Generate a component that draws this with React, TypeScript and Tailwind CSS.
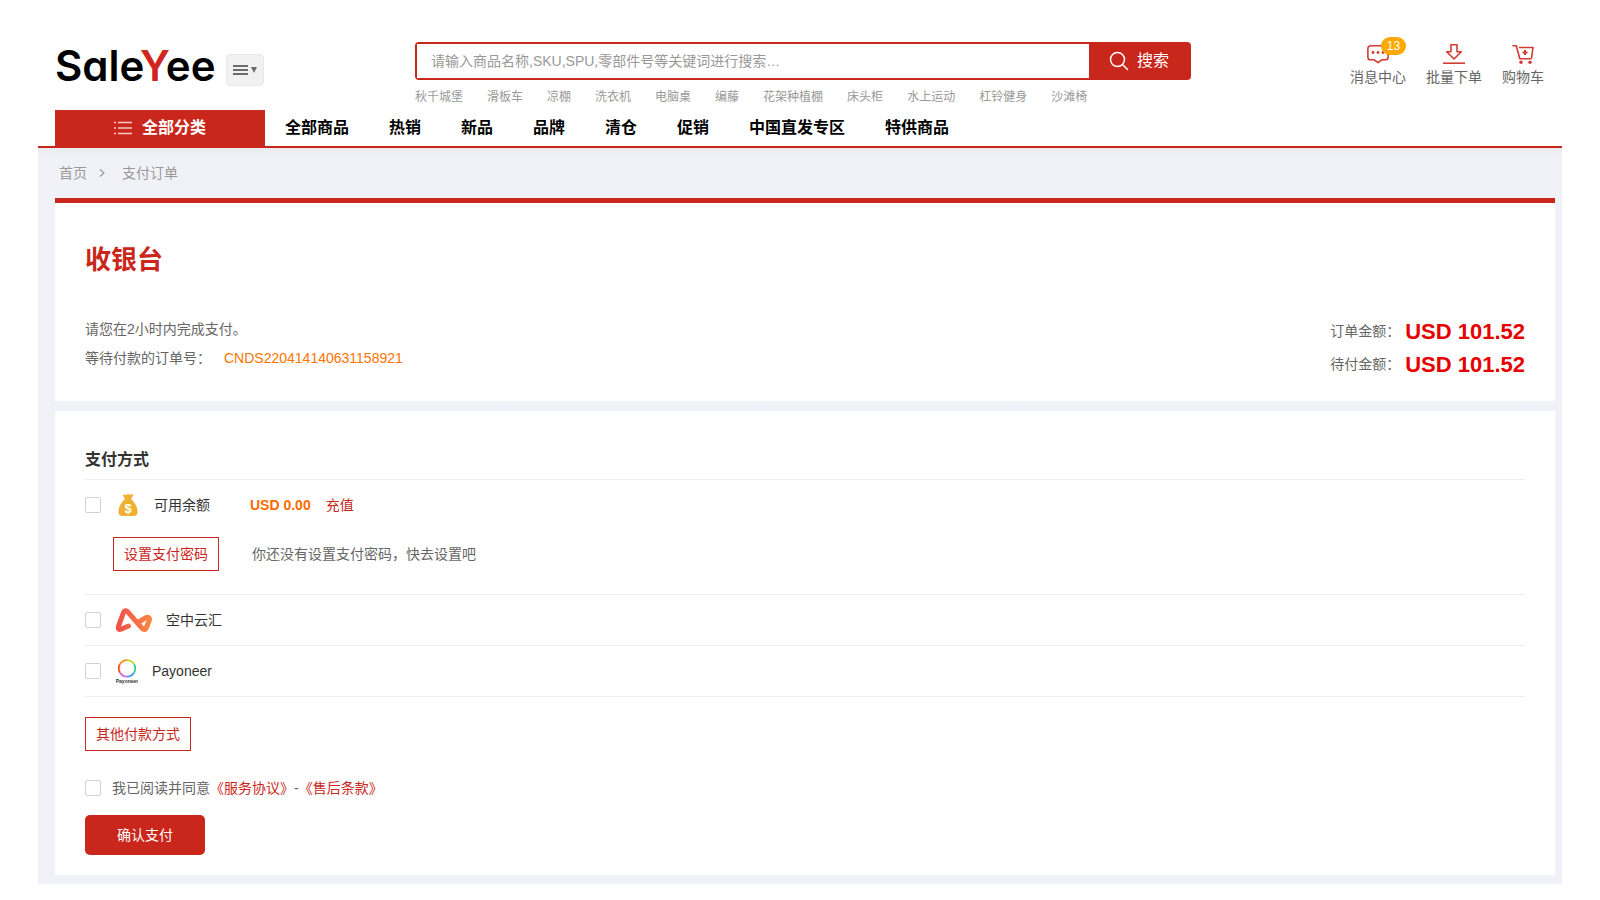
import { useState } from "react";

const hotWords = [
  "秋千城堡",
  "滑板车",
  "凉棚",
  "洗衣机",
  "电脑桌",
  "编藤",
  "花架种植棚",
  "床头柜",
  "水上运动",
  "杠铃健身",
  "沙滩椅",
];

const navItems = ["全部商品", "热销", "新品", "品牌", "清仓", "促销", "中国直发专区", "特供商品"];

const checkboxClass =
  "h-4 w-4 shrink-0 appearance-none rounded-xs border border-[#d2d2d2] bg-white checked:border-[#c9261c] checked:bg-[#c9261c]";
const outlineButtonClass =
  "h-[34px] w-[106px] shrink-0 border border-[#c9261c] bg-white text-sm text-[#c9261c]";

function MessageIcon() {
  return (
    <svg width="22" height="20" viewBox="0 0 22 20" fill="none" stroke="#d23c33" strokeWidth="1.6">
      <path
        d="M3.5 1.8h15a2.6 2.6 0 0 1 2.6 2.6v8.8a2.6 2.6 0 0 1-2.6 2.6h-3.7L11 18.6 7.2 15.800H3.5a2.6 2.6 0 0 1-2.600-2.600V4.4a2.6 2.6 0 0 1 2.6-2.600z"
        strokeLinejoin="round"
      />
      <g fill="#d23c33" stroke="none">
        <circle cx="6" cy="8.5" r="1.4" />
        <circle cx="11" cy="8.5" r="1.4" />
        <circle cx="16" cy="8.5" r="1.4" />
      </g>
    </svg>
  );
}

function DownloadIcon() {
  return (
    <svg width="22" height="20" viewBox="0 0 22 20" fill="none" stroke="#d23c33" strokeWidth="1.6">
      <path d="M8 .8h6v7h4.300L11 15 3.700 7.800H8z" strokeLinejoin="round" />
      <path d="M0 19.2h22" />
    </svg>
  );
}

function CartIcon() {
  return (
    <svg width="22" height="20" viewBox="0 0 22 20" fill="none" stroke="#d23c33" strokeWidth="1.6">
      <path d="M1 1.7h3.300l3.500 13h11.200" strokeLinejoin="round" strokeLinecap="round" />
      <path d="M7 3.5h14l-1.500 11" strokeLinejoin="round" />
      <path d="M13 6v5M10.500 8.500h5" strokeWidth="2" />
      <circle cx="9" cy="18.3" r="1.7" fill="#d23c33" stroke="none" />
      <circle cx="18" cy="18.3" r="1.7" fill="#d23c33" stroke="none" />
    </svg>
  );
}

function MoneyBagIcon() {
  return (
    <svg width="20" height="22" viewBox="0 0 20 22" className="shrink-0">
      <path
        d="M4.500.5c1.500-.5 2.500.8 3.700.3C9.300.2 10.500.1 11.700.6c1.300.5 2.300-.8 4 0L13.300 4.500v2.500H6.700V4.500z"
        fill="#f0b033"
      />
      <path
        d="M6.500 5.500h7c3.500 3 6 7.500 6 12.500 0 2.700-1.300 4-4 4H4.500c-2.700 0-4-1.300-4-4 0-5 2.500-9.500 6-12.500z"
        fill="#f0b033"
      />
      <text
        x="10"
        y="18.5"
        textAnchor="middle"
        fontSize="13"
        fontWeight="700"
        fontFamily="Liberation Sans, sans-serif"
        fill="#fff"
      >
        $
      </text>
    </svg>
  );
}

function AirwallexIcon() {
  return (
    <svg width="36" height="24" viewBox="0 0 36 24" fill="none" className="shrink-0">
      <defs>
        <linearGradient id="airwallex" x1="0" y1="0" x2="36" y2="0" gradientUnits="userSpaceOnUse">
          <stop offset="0" stopColor="#f04c4b" />
          <stop offset="1" stopColor="#f98a42" />
        </linearGradient>
      </defs>
      <path
        d="M12.500 18L5 21.200c-2 .7-3.300-.7-2.600-2.500L7.500 4.500c.8-2.200 3-2.400 4.300-.7l14.500 16.700c1.500 1.500 3.300 1.200 4-.7l3-7.500c.8-2.200-.8-3.600-2.800-2.900L23.500 13.500"
        stroke="url(#airwallex)"
        strokeWidth="5"
        strokeLinecap="round"
        strokeLinejoin="round"
      />
    </svg>
  );
}

function PayoneerIcon() {
  return (
    <svg width="22" height="25" viewBox="0 0 22 25" fill="none" className="shrink-0">
      <g strokeWidth="1.8">
        <path d="M11 1.200A8.200 8.200 0 0 1 18.100 5.300" stroke="#c5d92d" />
        <path d="M18.100 5.300A8.200 8.200 0 0 1 18.100 13.500" stroke="#2fcf8b" />
        <path d="M18.100 13.500A8.200 8.200 0 0 1 11 17.600" stroke="#4f9df0" />
        <path d="M11 17.600A8.200 8.200 0 0 1 3.900 13.500" stroke="#d467e0" />
        <path d="M3.900 13.500A8.200 8.200 0 0 1 3.900 5.300" stroke="#ff4b22" />
        <path d="M3.900 5.300A8.200 8.200 0 0 1 11 1.200" stroke="#ff8a1c" />
      </g>
      <text
        x="11"
        y="24"
        textAnchor="middle"
        fontSize="5"
        fontWeight="700"
        fontFamily="Liberation Sans, sans-serif"
        fill="#333"
      >
        Payoneer
      </text>
    </svg>
  );
}

function Header() {
  return (
    <header className="border-b-2 border-[#c9261c] pr-[18px] pl-[17px]">
      <div className="flex h-[110px] items-start">
        <a
          href="#"
          className="mt-[42px] w-[171px] font-['Inter',sans-serif] text-[42px] leading-[48px] font-semibold text-black [font-feature-settings:'cv11']"
        >
          Sale<span className="text-[#d0261f]">Y</span>ee
        </a>
        <button
          type="button"
          aria-label="菜单"
          className="mt-[54px] flex h-8 w-[38px] shrink-0 items-center justify-center gap-[3px] rounded-sm border border-[#e8e8e8] bg-[#f1f1f1]"
        >
          <svg width="15" height="10" viewBox="0 0 15 10" stroke="#6b6b6b" strokeWidth="2">
            <path d="M0 1h15M0 5h15M0 9h15" />
          </svg>
          <svg width="6" height="6" viewBox="0 0 6 6" fill="#6b6b6b">
            <path d="M0 0h6L3 6z" />
          </svg>
        </button>

        <div className="mt-[42px] ml-[151px] w-[776px]">
          <form className="flex h-[38px] rounded-sm bg-[#c9261c] p-[2px]" onSubmit={(e) => e.preventDefault()}>
            <input
              type="text"
              aria-label="搜索商品"
              placeholder="请输入商品名称,SKU,SPU,零部件号等关键词进行搜索…"
              className="min-w-0 flex-1 bg-white px-[14px] text-sm outline-none placeholder:text-[#999]"
            />
            <button type="submit" className="flex w-[100px] items-center justify-center gap-2 text-base text-white">
              <svg width="20" height="20" viewBox="0 0 20 20" fill="none" stroke="#fff" strokeWidth="1.5">
                <circle cx="8.5" cy="8.5" r="7" />
                <path d="M13.5 13.5l5 5" strokeLinecap="round" />
              </svg>
              搜索
            </button>
          </form>
          <div className="mt-2 flex gap-6 text-xs leading-[18px] whitespace-nowrap text-[#999]">
            {hotWords.map((word) => (
              <a key={word} href="#">
                {word}
              </a>
            ))}
          </div>
        </div>

        <div className="mt-11 ml-auto flex gap-5 text-sm leading-5 whitespace-nowrap text-[#666]">
          <a href="#" className="relative flex flex-col items-center gap-[3px]">
            <MessageIcon />
            消息中心
            <span className="absolute -top-[7px] right-0 h-[18px] w-[25px] rounded-full bg-[#ffa800] text-center text-xs leading-[18px] text-white">
              13
            </span>
          </a>
          <a href="#" className="flex flex-col items-center gap-[3px]">
            <DownloadIcon />
            批量下单
          </a>
          <a href="#" className="flex flex-col items-center gap-[3px]">
            <CartIcon />
            购物车
          </a>
        </div>
      </div>

      <nav className="flex h-9 text-base font-bold whitespace-nowrap text-black">
        <a href="#" className="flex w-[210px] items-center justify-center gap-[10px] bg-[#c9261c] text-white">
          <svg width="18" height="14" viewBox="0 0 18 14" stroke="#f4c9c6" strokeWidth="1.5">
            <path d="M0 1.500h2M4 1.500h14M0 7h2M4 7h14M0 12.500h2M4 12.500h14" />
          </svg>
          全部分类
        </a>
        {navItems.map((item) => (
          <a key={item} href="#" className="flex items-center px-5">
            {item}
          </a>
        ))}
      </nav>
    </header>
  );
}

function OrderSummary() {
  return (
    <section className="border-t-[5px] border-[#c9261c] bg-white px-[30px] pt-[37px] pb-5">
      <h1 className="text-[26px] leading-10 font-bold text-[#c9261c]">收银台</h1>
      <div className="mt-[35px] flex justify-between text-sm text-[#666]">
        <div className="leading-[29px]">
          <p>请您在2小时内完成支付。</p>
          <p className="flex">
            <span className="w-[139px]">等待付款的订单号：</span>
            <span className="text-[#ff7300]">CNDS220414140631158921</span>
          </p>
        </div>
        <dl className="leading-[33px]">
          <div className="flex">
            <dt className="w-[75px]">订单金额：</dt>
            <dd className="text-[22px] font-bold text-[#e60000]">USD 101.52</dd>
          </div>
          <div className="flex">
            <dt className="w-[75px]">待付金额：</dt>
            <dd className="text-[22px] font-bold text-[#e60000]">USD 101.52</dd>
          </div>
        </dl>
      </div>
    </section>
  );
}

function PaymentMethods() {
  const [method, setMethod] = useState("");
  const [agreed, setAgreed] = useState(false);

  const toggle = (name: string) => setMethod(method === name ? "" : name);

  return (
    <section className="mt-[10px] bg-white px-[30px] pt-[37px] pb-5 text-sm text-[#333]">
      <h2 className="h-[31px] text-base leading-6 font-bold">支付方式</h2>

      <div className="h-[115px] border-t border-[#eee]">
        <div className="flex h-[50px] items-center">
          <label className="flex w-[165px] items-center">
            <input
              type="checkbox"
              className={checkboxClass}
              checked={method === "balance"}
              onChange={() => toggle("balance")}
            />
            <span className="mr-4 ml-[17px]">
              <MoneyBagIcon />
            </span>
            可用余额
          </label>
          <span className="font-bold text-[#ff6a00]">USD 0.00</span>
          <a href="#" className="ml-[15px] text-[#c9261c]">
            充值
          </a>
        </div>
        <div className="mt-[7px] ml-7 flex items-center gap-[33px]">
          <button type="button" className={outlineButtonClass}>
            设置支付密码
          </button>
          <p className="text-[#666]">你还没有设置支付密码，快去设置吧</p>
        </div>
      </div>

      <label className="flex h-[51px] items-center border-t border-[#eee]">
        <input
          type="checkbox"
          className={checkboxClass}
          checked={method === "airwallex"}
          onChange={() => toggle("airwallex")}
        />
        <span className="mr-[14px] ml-[15px]">
          <AirwallexIcon />
        </span>
        空中云汇
      </label>
      <label className="flex h-[52px] items-center border-y border-[#eee]">
        <input
          type="checkbox"
          className={checkboxClass}
          checked={method === "payoneer"}
          onChange={() => toggle("payoneer")}
        />
        <span className="mr-[14px] ml-[15px]">
          <PayoneerIcon />
        </span>
        Payoneer
      </label>

      <div className="mt-5">
        <button type="button" className={outlineButtonClass}>
          其他付款方式
        </button>
      </div>

      <div className="mt-[27px] flex items-center text-[#666]">
        <input
          id="agree"
          type="checkbox"
          className={checkboxClass}
          checked={agreed}
          onChange={(e) => setAgreed(e.target.checked)}
        />
        <label htmlFor="agree" className="ml-[11px]">
          我已阅读并同意
        </label>
        <a href="#" className="text-[#c9261c]">
          《服务协议》
        </a>
        -
        <a href="#" className="text-[#c9261c]">
          《售后条款》
        </a>
      </div>

      <button type="button" className="mt-[17px] h-10 w-[120px] rounded-[5px] bg-[#c9261c] text-sm text-white">
        确认支付
      </button>
    </section>
  );
}

export default function App() {
  return (
    <div className="mx-[38px] font-['Liberation_Sans','Noto_Sans_CJK_SC',sans-serif]">
      <Header />
      <main className="bg-[#f1f2f7] bg-linear-to-b from-[#e9eaee] to-[#f1f2f7] to-[8px] pr-[7px] pb-[9px] pl-[17px]">
        <div className="flex h-[50px] items-center pl-1 text-sm text-[#999]">
          <a href="#">首页</a>
          <svg
            width="6"
            height="8"
            viewBox="0 0 6 8"
            fill="none"
            stroke="#999"
            strokeWidth="1.2"
            className="mr-[17px] ml-3"
          >
            <path d="M1 .5L5 4 1 7.500" />
          </svg>
          <span>支付订单</span>
        </div>
        <OrderSummary />
        <PaymentMethods />
      </main>
    </div>
  );
}
